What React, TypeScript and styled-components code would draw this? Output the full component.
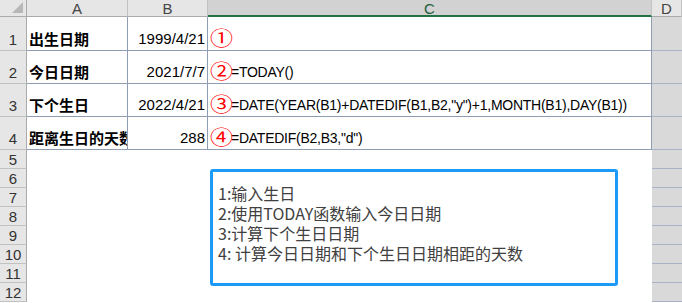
import React from 'react';
import styled, { createGlobalStyle, css } from 'styled-components';

const GlobalStyle = createGlobalStyle`
  html, body {
    margin: 0;
    padding: 0;
    background: #ffffff;
  }
  body {
    font-family: "Liberation Sans", Arial, "Noto Sans CJK SC", sans-serif;
    overflow: hidden;
  }
`;

const COLS = [27, 101, 80, 444, 30];
const ROWS = [17, 34, 33, 33, 33, 19, 19, 19, 19, 19, 19, 19, 19];

const Sheet = styled.div`
  position: relative;
  width: 682px;
  height: 303px;
  display: grid;
  grid-template-columns: ${COLS.map((c) => `${c}px`).join(' ')};
  grid-template-rows: ${ROWS.map((r) => `${r}px`).join(' ')};
  background: #ffffff;
  overflow: hidden;
`;

const HeaderCell = styled.div<{ $active?: boolean }>`
  box-sizing: border-box;
  display: flex;
  align-items: center;
  justify-content: center;
  background: ${({ $active }) => ($active ? '#d2d2d2' : '#e6e6e6')};
  border-right: 1px solid #c2c2c2;
  border-bottom: ${({ $active }) => ($active ? '2px solid #217346' : '1px solid #ababab')};
  color: ${({ $active }) => ($active ? '#1d5c3a' : '#444444')};
  font-size: 15px;
  line-height: 1;
  padding-top: 1px;
`;

const Corner = styled.div`
  box-sizing: border-box;
  position: relative;
  background: #e6e6e6;
  border-right: 1px solid #ababab;
  border-bottom: 1px solid #ababab;

  &::after {
    content: '';
    position: absolute;
    right: 3px;
    bottom: 3px;
    width: 0;
    height: 0;
    border-left: 11px solid transparent;
    border-bottom: 11px solid #b7b7b7;
  }
`;

const RowNum = styled.div<{ $tall?: boolean }>`
  box-sizing: border-box;
  display: flex;
  justify-content: center;
  align-items: ${({ $tall }) => ($tall ? 'flex-end' : 'center')};
  padding-bottom: ${({ $tall }) => ($tall ? '2px' : '0')};
  background: #e6e6e6;
  border-right: 1px solid #ababab;
  border-bottom: 1px solid #c2c2c2;
  color: #333333;
  font-size: 15px;
  line-height: 17px;
`;

const Cell = styled.div<{ $align?: 'left' | 'right'; $bold?: boolean; $ruled?: boolean }>`
  box-sizing: border-box;
  display: flex;
  align-items: flex-end;
  justify-content: ${({ $align }) => ($align === 'right' ? 'flex-end' : 'flex-start')};
  padding: 0 2px 2px 2px;
  white-space: nowrap;
  overflow: hidden;
  color: #000000;
  font-size: 15px;
  line-height: 18px;
  font-weight: ${({ $bold }) => ($bold ? 700 : 400)};
  font-family: ${({ $bold }) =>
    $bold ? '"Noto Sans CJK SC", sans-serif' : '"Liberation Sans", Arial, "Noto Sans CJK SC", sans-serif'};
  ${({ $ruled }) =>
    $ruled &&
    css`
      border-right: 1px solid #8f9db4;
      border-bottom: 1px solid #8f9db4;
    `}
`;

const OutsideCell = styled.div`
  box-sizing: border-box;
  background: #d9d9d9;
  border-bottom: 1px solid #a8b3c6;
`;

// circled step numbers, drawn a little wider than tall
const Circled = styled.span`
  display: inline-block;
  width: 24px;
  margin-right: -3px;
  margin-bottom: -1px;
  color: #ff0000;
  font-family: "Noto Sans CJK SC", sans-serif;
  font-size: 20px;
  line-height: 22px;
  transform: scaleX(1.15);
  transform-origin: left bottom;
`;

const Formula = styled.span`
  font-size: 14px;
  letter-spacing: -0.25px;
  line-height: 18px;
`;

const NoteBox = styled.div`
  position: absolute;
  left: 210px;
  top: 169px;
  width: 408px;
  height: 117px;
  box-sizing: border-box;
  border: 3px solid #1b9af7;
  border-radius: 3px;
  background: #ffffff;
  padding: 11px 0 0 5px;
  color: #404040;
  font-family: "Noto Sans CJK SC", sans-serif;
  font-size: 16px;
  line-height: 20px;
`;

const NoteLine = styled.div`
  white-space: nowrap;
  height: 20px;
`;

const rows = [
  { label: '出生日期', value: '1999/4/21', mark: '①', formula: '' },
  { label: '今日日期', value: '2021/7/7', mark: '②', formula: '=TODAY()' },
  {
    label: '下个生日',
    value: '2022/4/21',
    mark: '③',
    formula: '=DATE(YEAR(B1)+DATEDIF(B1,B2,"y")+1,MONTH(B1),DAY(B1))',
  },
  { label: '距离生日的天数', value: '288', mark: '④', formula: '=DATEDIF(B2,B3,"d")' },
];

const notes = [
  '1:输入生日',
  '2:使用TODAY函数输入今日日期',
  '3:计算下个生日日期',
  '4: 计算今日日期和下个生日日期相距的天数',
];

export default function App() {
  return (
    <>
      <GlobalStyle />
      <Sheet>
        <Corner />
        <HeaderCell>A</HeaderCell>
        <HeaderCell>B</HeaderCell>
        <HeaderCell $active>C</HeaderCell>
        <HeaderCell>D</HeaderCell>

        {rows.map((r, i) => (
          <React.Fragment key={r.label}>
            <RowNum $tall>{i + 1}</RowNum>
            <Cell $bold $ruled>
              {r.label}
            </Cell>
            <Cell $align="right" $ruled>
              {r.value}
            </Cell>
            <Cell $ruled>
              <Circled>{r.mark}</Circled>
              <Formula>{r.formula}</Formula>
            </Cell>
            <OutsideCell />
          </React.Fragment>
        ))}

        {Array.from({ length: 8 }, (_, i) => (
          <React.Fragment key={i}>
            <RowNum>{i + 5}</RowNum>
            <Cell />
            <Cell />
            <Cell />
            <OutsideCell />
          </React.Fragment>
        ))}

        <NoteBox>
          {notes.map((n) => (
            <NoteLine key={n}>{n}</NoteLine>
          ))}
        </NoteBox>
      </Sheet>
    </>
  );
}
